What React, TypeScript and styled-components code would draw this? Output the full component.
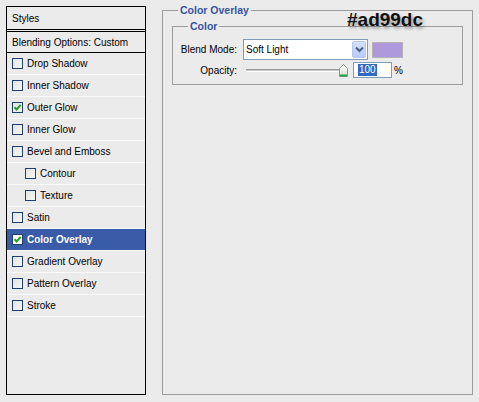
import styled, { createGlobalStyle } from "styled-components";

const GlobalStyle = createGlobalStyle`
  html, body {
    margin: 0;
    background: #ebebeb;
  }
  body {
    font-family: "Liberation Sans", Arial, sans-serif;
    font-size: 10px;
    color: #000;
  }
`;

const Page = styled.div`
  position: relative;
  display: flex;
  align-items: flex-start;
  width: 479px;
  height: 402px;
  padding-left: 6px;
  box-sizing: border-box;
  overflow: hidden;
`;

/* ---- left: effects list ---- */

const StylesPanel = styled.div`
  margin-top: 6px;
  width: 140px;
  height: 389px;
  box-sizing: border-box;
  border: 1px solid #000;
  display: flex;
  flex-direction: column;
`;

const PanelHeader = styled.div`
  height: 22px;
  display: flex;
  align-items: center;
  padding-left: 5px;
  border-bottom: 3px double #000;
`;

const BlendingRow = styled.div`
  height: 20px;
  display: flex;
  align-items: center;
  padding-left: 5px;
  border-bottom: 1px solid #000;
`;

const EffectRow = styled.div<{ $nested?: boolean; $selected?: boolean }>`
  height: 21px;
  display: flex;
  align-items: center;
  gap: 4px;
  padding-left: ${p => (p.$nested ? 18 : 5)}px;
  border-bottom: 1px solid #fafafa;
  background: ${p => (p.$selected ? "#3a5ba7" : "transparent")};
  color: ${p => (p.$selected ? "#fff" : "#000")};
  font-weight: ${p => (p.$selected ? 700 : 400)};
`;

const Box = styled.span<{ $selected?: boolean }>`
  width: 11px;
  height: 11px;
  box-sizing: border-box;
  border: 1px solid #1f3f6e;
  background: ${p => (p.$selected ? "#fff" : "linear-gradient(135deg, #e4e4e0, #f6f6f4)")};
  display: flex;
  align-items: center;
  justify-content: center;
  flex-shrink: 0;
`;

const Check = () => (
  <svg width="9" height="9" viewBox="0 0 9 9">
    <path d="M1.5 4.2 L3.6 6.4 L7.6 1.8" fill="none" stroke="#21a121" strokeWidth="2" />
  </svg>
);

/* ---- right: overlay settings ---- */

const Group = styled.fieldset`
  margin: 4px 0 0 16px;
  width: 311px;
  height: 391px;
  box-sizing: border-box;
  padding: 3px 9px 0 9px;
  border: 1px solid #9c9c9c;
`;

const Legend = styled.legend<{ $indent: number }>`
  margin-left: ${p => p.$indent}px;
  padding: 0 2px;
  line-height: 13px;
  font-size: 10.5px;
  font-weight: 700;
  color: #3a52a2;
`;

const InnerGroup = styled.fieldset`
  margin: 0;
  padding: 6px 0 6px 0;
  border: 1px solid #9c9c9c;
  display: grid;
  grid-template-columns: 65px auto;
  grid-template-rows: 21px 16px;
  column-gap: 5px;
  row-gap: 2px;
  align-items: center;
`;

const FieldLabel = styled.span`
  text-align: right;
  padding-right: 1px;
`;

const Controls = styled.div`
  display: flex;
  align-items: center;
  height: 100%;
`;

const Combo = styled.div`
  width: 125px;
  height: 21px;
  box-sizing: border-box;
  border: 1px solid #7f9db9;
  background: #fff;
  display: flex;
  align-items: center;
  padding-left: 2px;
`;

const ComboText = styled.span`
  flex: 1;
`;

const DropButton = styled.div`
  width: 14px;
  height: 17px;
  margin-right: 1px;
  box-sizing: border-box;
  border: 1px solid #b5c7ee;
  border-radius: 2px;
  background: linear-gradient(#d6e1fa, #b7cbf5);
  display: flex;
  align-items: center;
  justify-content: center;
`;

const Swatch = styled.div<{ $color: string }>`
  margin-left: 4px;
  width: 31px;
  height: 16px;
  box-sizing: border-box;
  border: 1px solid #b4b4b4;
  background: ${p => p.$color};
`;

const Slider = styled.div`
  margin-left: 3px;
  width: 103px;
  height: 16px;
  display: flex;
  align-items: center;
  gap: 0;
`;

const Track = styled.div`
  flex: 1;
  height: 1px;
  border-top: 1px solid #9a9a9a;
  border-bottom: 1px solid #fff;
  background: #c8c8c8;
`;

const NumberField = styled.div`
  margin-left: 4px;
  width: 39px;
  height: 16px;
  box-sizing: border-box;
  border: 1px solid #7f9db9;
  background: #fff;
  display: flex;
  align-items: center;
  padding-left: 4px;
`;

const Selected = styled.span`
  background: #316ac5;
  color: #fff;
  line-height: 12px;
  padding: 0 1px;
`;

const Unit = styled.span`
  margin-left: 2px;
`;

const HexNote = styled.div`
  position: absolute;
  left: 347px;
  top: 10px;
  font-family: "Liberation Sans", Arial, sans-serif;
  font-size: 19px;
  line-height: 20px;
  font-weight: 700;
  color: #111;
  text-shadow: 2px 3px 3px rgba(0, 0, 0, 0.3);
`;

const Chevron = () => (
  <svg width="9" height="7" viewBox="0 0 9 7">
    <path d="M1 1.5 L4.5 5 L8 1.5" fill="none" stroke="#4b5f86" strokeWidth="2" />
  </svg>
);

const Thumb = () => (
  <svg width="9" height="13" viewBox="0 0 9 13" style={{ marginLeft: -5, marginRight: 1 }}>
    <defs>
      <linearGradient id="thumbFill" x1="0" y1="0" x2="0" y2="1">
        <stop offset="0" stopColor="#ffffff" />
        <stop offset="1" stopColor="#d8d8d0" />
      </linearGradient>
    </defs>
    <path d="M0.5 4.5 L4.5 0.5 L8.5 4.5 L8.5 12.5 L0.5 12.5 Z" fill="url(#thumbFill)" stroke="#8c9a8c" />
    <path d="M1 11.5 H8" stroke="#21a34a" strokeWidth="2" />
  </svg>
);

const effects = [
  { name: "Drop Shadow" },
  { name: "Inner Shadow" },
  { name: "Outer Glow", checked: true },
  { name: "Inner Glow" },
  { name: "Bevel and Emboss" },
  { name: "Contour", nested: true },
  { name: "Texture", nested: true },
  { name: "Satin" },
  { name: "Color Overlay", checked: true, selected: true },
  { name: "Gradient Overlay" },
  { name: "Pattern Overlay" },
  { name: "Stroke" },
];

export default function App() {
  return (
    <>
      <GlobalStyle />
      <Page>
        <StylesPanel>
          <PanelHeader>Styles</PanelHeader>
          <BlendingRow>Blending Options: Custom</BlendingRow>
          {effects.map(e => (
            <EffectRow key={e.name} $nested={e.nested} $selected={e.selected}>
              <Box $selected={e.selected}>{e.checked && <Check />}</Box>
              {e.name}
            </EffectRow>
          ))}
        </StylesPanel>

        <Group>
          <Legend $indent={6}>Color Overlay</Legend>
          <InnerGroup>
            <Legend $indent={15}>Color</Legend>
            <FieldLabel>Blend Mode:</FieldLabel>
            <Controls>
              <Combo>
                <ComboText>Soft Light</ComboText>
                <DropButton>
                  <Chevron />
                </DropButton>
              </Combo>
              <Swatch $color="#ad99dc" />
            </Controls>
            <FieldLabel>Opacity:</FieldLabel>
            <Controls>
              <Slider>
                <Track />
                <Thumb />
              </Slider>
              <NumberField>
                <Selected>100</Selected>
              </NumberField>
              <Unit>%</Unit>
            </Controls>
          </InnerGroup>
        </Group>

        <HexNote>#ad99dc</HexNote>
      </Page>
    </>
  );
}
